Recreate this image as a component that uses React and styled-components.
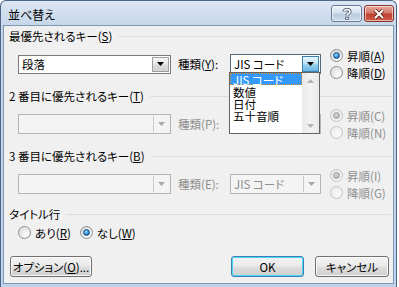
import styled, { createGlobalStyle } from "styled-components";

const GlobalStyle = createGlobalStyle`
  html, body {
    margin: 0;
    padding: 0;
  }
  body {
    width: 399px;
    height: 287px;
    overflow: hidden;
    background: #ffffff;
    font-family: "Noto Sans CJK JP", "Noto Sans", sans-serif;
    font-size: 11.5px;
    font-feature-settings: "palt";
    color: #000;
  }
`;

const Window = styled.div`
  width: 397px;
  height: 287px;
  box-sizing: border-box;
  border: 1px solid #4d6585;
  border-bottom: none;
  border-radius: 6px 6px 0 0;
  background: linear-gradient(#dbe6f3, #c4d6ea 26px, #bed2e9);
  display: flex;
  flex-direction: column;
  padding: 0 2px 3px 2px;
`;

const TitleBar = styled.div`
  height: 24px;
  display: flex;
  align-items: flex-start;
  padding-top: 4px;
  box-sizing: border-box;
`;

const Title = styled.div`
  flex: 1;
  padding: 3px 0 0 5px;
  font-size: 12px;
  line-height: 14px;
`;

const CaptionButton = styled.div`
  width: ${(p) => p.$w}px;
  height: 17px;
  box-sizing: border-box;
  border: 1px solid ${(p) => (p.$close ? "#8b3027" : "#6a7c95")};
  border-radius: 3px;
  margin-left: ${(p) => (p.$close ? 2 : 0)}px;
  background: ${(p) =>
    p.$close
      ? "linear-gradient(#e9aa9f, #d47a6d 45%, #c0412f 55%, #cf5e4a)"
      : "linear-gradient(#eef3f9, #d6e1ee 45%, #bccbdf 55%, #cddaea)"};
  display: flex;
  align-items: center;
  justify-content: center;
  box-shadow: inset 0 0 0 1px rgba(255, 255, 255, 0.55);
`;

const Client = styled.div`
  flex: 1;
  border: 1px solid #7f96b4;
  background: #f0f0f0;
  position: relative;
  padding-top: 2px;
  display: flex;
  flex-direction: column;
`;

const Section = styled.div`
  margin-bottom: ${(p) => p.$gap}px;
`;

const Heading = styled.div`
  height: 16px;
  display: flex;
  align-items: center;
  padding-left: 5px;
  color: ${(p) => (p.$disabled ? "#8f8f8f" : "#000")};
  white-space: nowrap;
`;

const Rule = styled.div`
  flex: 1;
  height: 1px;
  background: #d5dfe5;
  margin: 1px 2px 0 6px;
`;

const Row = styled.div`
  height: 34px;
  margin-top: 3px;
  display: flex;
  align-items: center;
  padding-left: 14px;
`;

const Combo = styled.div`
  position: relative;
  width: ${(p) => p.$w}px;
  height: ${(p) => p.$h || 20}px;
  box-sizing: border-box;
  border: 1px solid ${(p) => (p.$disabled ? "#b5b5b5" : p.$open ? "#5a6a7a" : "#7a7a7a")};
  background: ${(p) => (p.$disabled ? "#f4f4f4" : "#fff")};
  color: ${(p) => (p.$disabled ? "#8f8f8f" : "#000")};
  display: flex;
  align-items: center;
`;

const ComboText = styled.div`
  flex: 1;
  padding-left: 3px;
  line-height: 14px;
  white-space: nowrap;
`;

const DropButton = styled.div`
  width: 17px;
  align-self: stretch;
  box-sizing: border-box;
  margin: ${(p) => (p.$flat ? "0" : "1px")};
  border: 1px solid ${(p) => (p.$open ? "#3c7fb1" : p.$flat ? "transparent" : "#a0a0a0")};
  border-left: 1px solid ${(p) => (p.$open ? "#3c7fb1" : p.$flat ? "#c9c9c9" : "#a0a0a0")};
  background: ${(p) =>
    p.$open
      ? "linear-gradient(#e5f4fc, #c4e5f6 45%, #98d1ef 55%, #6cb6e3)"
      : p.$flat
      ? "#f4f4f4"
      : "linear-gradient(#f6f6f6, #e9e9e9 45%, #dcdcdc 55%, #d2d2d2)"};
  display: flex;
  align-items: center;
  justify-content: center;
`;

const Label = styled.div`
  width: 52px;
  margin-left: 7px;
  color: ${(p) => (p.$disabled ? "#8f8f8f" : "#000")};
  white-space: nowrap;
`;

const RadioCol = styled.div`
  margin-left: 9px;
  display: flex;
  flex-direction: column;
`;

const RadioRow = styled.div`
  display: flex;
  gap: ${(p) => p.$gap || 0}px;
  padding-left: ${(p) => p.$pad || 0}px;
  margin-top: ${(p) => p.$top || 0}px;
`;

const RadioItem = styled.label`
  height: 17px;
  display: flex;
  align-items: center;
  gap: 4px;
  color: ${(p) => (p.$disabled ? "#8f8f8f" : "#000")};
  white-space: nowrap;
`;

const RadioCircle = styled.span`
  width: 13px;
  height: 13px;
  box-sizing: border-box;
  border-radius: 50%;
  border: 1px solid ${(p) => (p.$disabled ? "#c5c5c5" : "#8c8e90")};
  background: ${(p) =>
    p.$disabled
      ? "radial-gradient(circle at 60% 65%, #fbfbfb, #e6e6e6)"
      : "radial-gradient(circle at 65% 70%, #ffffff, #e2e2e2 70%, #cfcfcf)"};
  display: flex;
  align-items: center;
  justify-content: center;

  &::after {
    content: "";
    display: ${(p) => (p.$checked ? "block" : "none")};
    width: 5px;
    height: 5px;
    border-radius: 50%;
    border: 1px solid ${(p) => (p.$disabled ? "#9d9d9d" : "#1b4f84")};
    background: ${(p) =>
      p.$disabled
        ? "radial-gradient(circle at 40% 35%, #d8d8d8, #a9a9a9)"
        : "radial-gradient(circle at 40% 35%, #9fe0ff, #2d8ad8 55%, #0f4d9a)"};
  }
`;

const U = styled.span`
  text-decoration: underline;
  text-underline-offset: 1px;
`;

const ListBox = styled.div`
  position: absolute;
  left: 225px;
  top: 46px;
  width: 91px;
  height: 62px;
  box-sizing: border-box;
  border: 1px solid #646464;
  background: #fff;
  display: flex;
  z-index: 2;
`;

const ListItems = styled.div`
  flex: 1;
`;

const ListItem = styled.div`
  height: 12px;
  line-height: 12px;
  padding-left: 2px;
  box-sizing: border-box;
  white-space: nowrap;
  background: ${(p) => (p.$selected ? "#3399ff" : "transparent")};
  color: ${(p) => (p.$selected ? "#fff" : "#000")};
  border: 1px dotted ${(p) => (p.$selected ? "#d98a2b" : "transparent")};
`;

const ScrollBar = styled.div`
  width: 17px;
  background: linear-gradient(90deg, #e9e9e9, #f3f3f3 50%, #e9e9e9);
  display: flex;
  flex-direction: column;
  justify-content: space-between;
  align-items: center;
  padding: 6px 0 5px;
  box-sizing: border-box;
`;

const Buttons = styled.div`
  margin-top: auto;
  margin-bottom: 6px;
  display: flex;
  justify-content: space-between;
  padding: 0 4px 0 6px;
`;

const ButtonGroup = styled.div`
  display: flex;
  gap: 11px;
`;

const Button = styled.div`
  width: ${(p) => p.$w}px;
  height: 21px;
  box-sizing: border-box;
  border: 1px solid ${(p) => (p.$default ? "#3c7fb1" : "#707070")};
  border-radius: 3px;
  background: linear-gradient(#f2f2f2, #ebebeb 45%, #dddddd 55%, #cfcfcf);
  box-shadow: inset 0 0 0 1px ${(p) => (p.$default ? "#48d6f9" : "rgba(255,255,255,0.8)")};
  display: flex;
  align-items: center;
  justify-content: center;
  white-space: nowrap;
  line-height: 14px;
`;

const Arrow = ({ color = "#000", up }) => (
  <svg width="7" height="4" viewBox="0 0 7 4">
    <polygon points={up ? "0,4 7,4 3.5,0" : "0,0 7,0 3.5,4"} fill={color} />
  </svg>
);

const Radio = ({ checked, disabled, children }) => (
  <RadioItem $disabled={disabled}>
    <RadioCircle $checked={checked} $disabled={disabled} />
    <span>{children}</span>
  </RadioItem>
);

const App = () => {
  return (
    <>
      <GlobalStyle />
      <Window>
        <TitleBar>
          <Title>並べ替え</Title>
          <CaptionButton $w={31}>
            <svg width="10" height="12" viewBox="0 0 10 12">
              <path
                d="M2 3.5 C2 1 8 1 8 3.8 C8 5.5 5 5.6 5 7.6"
                fill="none"
                stroke="#3b4a5e"
                strokeWidth="3.2"
              />
              <path
                d="M2 3.5 C2 1 8 1 8 3.8 C8 5.5 5 5.6 5 7.6"
                fill="none"
                stroke="#fff"
                strokeWidth="1.6"
              />
              <rect x="3.3" y="8.8" width="3.4" height="3" fill="#3b4a5e" />
              <rect x="4.1" y="9.5" width="1.8" height="1.6" fill="#fff" />
            </svg>
          </CaptionButton>
          <CaptionButton $w={30} $close>
            <svg width="12" height="10" viewBox="0 0 12 10">
              <path d="M2 1 L10 9 M10 1 L2 9" stroke="#5a2018" strokeWidth="3.6" />
              <path d="M2 1 L10 9 M10 1 L2 9" stroke="#fff" strokeWidth="2" />
            </svg>
          </CaptionButton>
        </TitleBar>
        <Client>
          <Section $gap={7}>
            <Heading>
              最優先されるキー(<U>S</U>)
              <Rule />
            </Heading>
            <Row>
              <Combo $w={153} $h={19}>
                <ComboText>段落</ComboText>
                <DropButton>
                  <Arrow />
                </DropButton>
              </Combo>
              <Label>
                種類(<U>Y</U>):
              </Label>
              <Combo $w={91} $open>
                <ComboText>JIS コード</ComboText>
                <DropButton $open>
                  <Arrow />
                </DropButton>
              </Combo>
              <RadioCol>
                <Radio checked>
                  昇順(<U>A</U>)
                </Radio>
                <Radio>
                  降順(<U>D</U>)
                </Radio>
              </RadioCol>
            </Row>
          </Section>

          <Section $gap={7}>
            <Heading>
              2 番目に優先されるキー(<U>T</U>)
              <Rule />
            </Heading>
            <Row>
              <Combo $w={153} $disabled>
                <ComboText />
                <DropButton $flat>
                  <Arrow color="#a8a8a8" />
                </DropButton>
              </Combo>
              <Label $disabled>種類(P):</Label>
              <Combo $w={91} $disabled />
              <RadioCol>
                <Radio checked disabled>
                  昇順(C)
                </Radio>
                <Radio disabled>降順(N)</Radio>
              </RadioCol>
            </Row>
          </Section>

          <Section $gap={5}>
            <Heading>
              3 番目に優先されるキー(<U>B</U>)
              <Rule />
            </Heading>
            <Row>
              <Combo $w={153} $disabled>
                <ComboText />
                <DropButton $flat>
                  <Arrow color="#a8a8a8" />
                </DropButton>
              </Combo>
              <Label $disabled>種類(E):</Label>
              <Combo $w={91} $disabled>
                <ComboText>JIS コード</ComboText>
                <DropButton $flat>
                  <Arrow color="#a8a8a8" />
                </DropButton>
              </Combo>
              <RadioCol>
                <Radio checked disabled>
                  昇順(I)
                </Radio>
                <Radio disabled>降順(G)</Radio>
              </RadioCol>
            </Row>
          </Section>

          <Section $gap={0}>
            <Heading>
              タイトル行
              <Rule />
            </Heading>
            <RadioRow $gap={9} $pad={14} $top={2}>
              <Radio>
                あり(<U>R</U>)
              </Radio>
              <Radio checked>
                なし(<U>W</U>)
              </Radio>
            </RadioRow>
          </Section>

          <Buttons>
            <Button $w={82}>
              オプション(<U>O</U>)...
            </Button>
            <ButtonGroup>
              <Button $w={73} $default>
                OK
              </Button>
              <Button $w={74}>キャンセル</Button>
            </ButtonGroup>
          </Buttons>

          <ListBox>
            <ListItems>
              <ListItem $selected>JIS コード</ListItem>
              <ListItem>数値</ListItem>
              <ListItem>日付</ListItem>
              <ListItem>五十音順</ListItem>
            </ListItems>
            <ScrollBar>
              <Arrow color="#b0b0b0" up />
              <Arrow color="#b0b0b0" />
            </ScrollBar>
          </ListBox>
        </Client>
      </Window>
    </>
  );
};

export default App;
